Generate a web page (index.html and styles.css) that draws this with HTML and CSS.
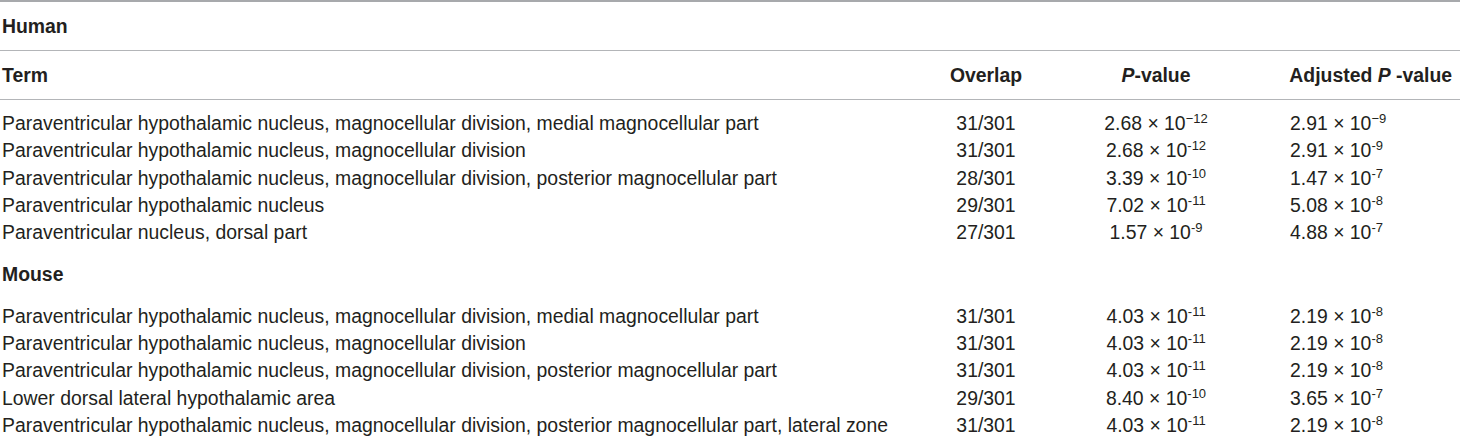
FILE: index.html
```html
<!DOCTYPE html>
<html>
<head>
<meta charset="utf-8">
<link rel="stylesheet" href="styles.css">
</head>
<body>
<table class="tbl">
  <colgroup>
    <col class="c-term"><col class="c-ov"><col class="c-p"><col class="c-adj">
  </colgroup>
  <tbody>
    <tr class="group first"><td colspan="4">Human</td></tr>
    <tr class="head">
      <td class="term">Term</td>
      <td class="ov">Overlap</td>
      <td class="p"><i>P</i>-value</td>
      <td class="adj-h">Adjusted <i>P</i> -value</td>
    </tr>
    <tr class="row top"><td class="term">Paraventricular hypothalamic nucleus, magnocellular division, medial magnocellular part</td><td class="ov">31/301</td><td class="p">2.68 × 10<sup>−12</sup></td><td class="adj">2.91 × 10<sup>−9</sup></td></tr>
    <tr class="row"><td class="term">Paraventricular hypothalamic nucleus, magnocellular division</td><td class="ov">31/301</td><td class="p">2.68 × 10<sup>-12</sup></td><td class="adj">2.91 × 10<sup>-9</sup></td></tr>
    <tr class="row"><td class="term">Paraventricular hypothalamic nucleus, magnocellular division, posterior magnocellular part</td><td class="ov">28/301</td><td class="p">3.39 × 10<sup>-10</sup></td><td class="adj">1.47 × 10<sup>-7</sup></td></tr>
    <tr class="row"><td class="term">Paraventricular hypothalamic nucleus</td><td class="ov">29/301</td><td class="p">7.02 × 10<sup>-11</sup></td><td class="adj">5.08 × 10<sup>-8</sup></td></tr>
    <tr class="row"><td class="term">Paraventricular nucleus, dorsal part</td><td class="ov">27/301</td><td class="p">1.57 × 10<sup>-9</sup></td><td class="adj">4.88 × 10<sup>-7</sup></td></tr>
    <tr class="group mid"><td colspan="4">Mouse</td></tr>
    <tr class="row"><td class="term">Paraventricular hypothalamic nucleus, magnocellular division, medial magnocellular part</td><td class="ov">31/301</td><td class="p">4.03 × 10<sup>-11</sup></td><td class="adj">2.19 × 10<sup>-8</sup></td></tr>
    <tr class="row"><td class="term">Paraventricular hypothalamic nucleus, magnocellular division</td><td class="ov">31/301</td><td class="p">4.03 × 10<sup>-11</sup></td><td class="adj">2.19 × 10<sup>-8</sup></td></tr>
    <tr class="row"><td class="term">Paraventricular hypothalamic nucleus, magnocellular division, posterior magnocellular part</td><td class="ov">31/301</td><td class="p">4.03 × 10<sup>-11</sup></td><td class="adj">2.19 × 10<sup>-8</sup></td></tr>
    <tr class="row"><td class="term">Lower dorsal lateral hypothalamic area</td><td class="ov">29/301</td><td class="p">8.40 × 10<sup>-10</sup></td><td class="adj">3.65 × 10<sup>-7</sup></td></tr>
    <tr class="row"><td class="term">Paraventricular hypothalamic nucleus, magnocellular division, posterior magnocellular part, lateral zone</td><td class="ov">31/301</td><td class="p">4.03 × 10<sup>-11</sup></td><td class="adj">2.19 × 10<sup>-8</sup></td></tr>
  </tbody>
</table>
</body>
</html>
```

FILE: styles.css
```css
html, body {
  margin: 0;
  padding: 0;
  background: #fff;
}
body {
  font-family: "Liberation Sans", Arial, Helvetica, sans-serif;
  font-size: 19.4px;
  color: #231f20;
}
.tbl {
  width: 1460px;
  table-layout: fixed;
  border-collapse: collapse;
  border-top: 2px solid #a7a9ac;
}
.c-term { width: 910px; }
.c-ov { width: 152px; }
.c-p { width: 188px; }
.c-adj { width: 210px; }
td {
  padding: 0;
  white-space: nowrap;
  vertical-align: middle;
}
.group td {
  font-weight: bold;
  padding-left: 2px;
}
.group.first td {
  height: 48px;
  border-bottom: 1px solid #b3b5b8;
}
.head td {
  height: 48px;
  font-weight: bold;
  border-bottom: 1px solid #b3b5b8;
}
.group.mid td {
  height: 55px;
  padding-top: 1px;
}
.row td {
  height: 27.3px;
}
.row.top td {
  height: 27.3px;
  padding-top: 10px;
}
.term { padding-left: 2px; text-align: left; }
.ov { text-align: center; }
.p { text-align: center; }
.adj-h { text-align: right; padding-right: 8px; }
.adj { text-align: left; padding-left: 40px; }
sup {
  font-size: 13px;
  line-height: 0;
  vertical-align: 7px;
}
```
